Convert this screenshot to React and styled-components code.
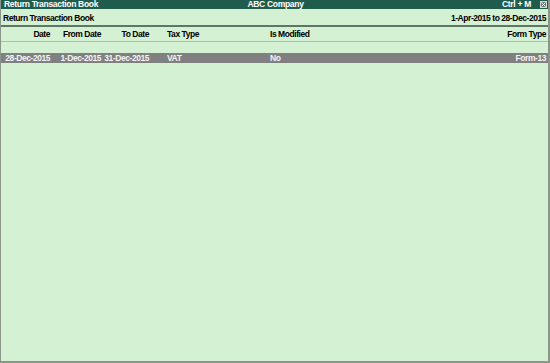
import React from 'react'
import styled, { createGlobalStyle } from 'styled-components'

const GlobalStyle = createGlobalStyle`
  html, body {
    margin: 0;
    padding: 0;
    background: #d4f1d4;
  }
  body {
    font-family: "Liberation Sans", Arial, sans-serif;
    font-weight: bold;
    font-size: 8.5px;
    letter-spacing: -0.45px;
  }
`

const Window = styled.div`
  width: 550px;
  height: 363px;
  box-sizing: border-box;
  display: flex;
  flex-direction: column;
  background: #d4f1d4;
  border-left: 1px solid #8a968a;
  border-right: 2px solid #8a968a;
  border-bottom: 2px solid #8a968a;
  color: #000;
`

const TitleBar = styled.div`
  height: 9px;
  display: grid;
  grid-template-columns: 1fr auto 1fr;
  align-items: center;
  background: #1f5c4d;
  color: #fff;
  padding: 0 1px 0 3px;
  line-height: 9px;
  letter-spacing: -0.3px;
`

const TitleRight = styled.div`
  display: flex;
  justify-content: flex-end;
  align-items: center;
  gap: 9px;
`

const CloseBox = styled.span`
  width: 7px;
  height: 7px;
  box-sizing: border-box;
  border: 1px solid #d8d8d8;
  background: #6c7a74;
  display: flex;
  align-items: center;
  justify-content: center;
`

const SubHeader = styled.div`
  height: 15px;
  display: flex;
  align-items: center;
  justify-content: space-between;
  padding: 1px 2px 0 2px;
  border-bottom: 2px solid #5f7566;
`

const Row = styled.div`
  display: grid;
  grid-template-columns: 49px 51px 48px 121px 1fr auto;
  align-items: center;
  height: ${p => p.$height}px;
  padding-right: 2px;
  background: ${p => (p.$selected ? '#808080' : 'transparent')};
  color: ${p => (p.$selected ? '#f4f4f4' : '#000')};
  border-bottom: ${p => (p.$ruled ? '1px solid #a9bfab' : 'none')};
`

const Cell = styled.div`
  white-space: nowrap;
  text-align: ${p => p.$align || 'left'};
  padding-left: ${p => p.$indent || 0}px;
`

const Gap = styled.div`
  height: 11px;
`

const columns = [
  { key: 'date', label: 'Date', align: 'right' },
  { key: 'from', label: 'From Date', align: 'right' },
  { key: 'to', label: 'To Date', align: 'right' },
  { key: 'tax', label: 'Tax Type', indent: 18 },
  { key: 'modified', label: 'Is Modified' },
  { key: 'form', label: 'Form Type', align: 'right' },
]

const rows = [
  {
    date: '28-Dec-2015',
    from: '1-Dec-2015',
    to: '31-Dec-2015',
    tax: 'VAT',
    modified: 'No',
    form: 'Form-13',
  },
]

export default function App() {
  return (
    <>
      <GlobalStyle />
      <Window>
        <TitleBar>
          <span>Return Transaction Book</span>
          <span>ABC Company</span>
          <TitleRight>
            <span>Ctrl + M</span>
            <CloseBox>
              <svg width="5" height="5" viewBox="0 0 5 5">
                <path d="M0.5 0.5 L4.5 4.5 M4.5 0.5 L0.5 4.5" stroke="#fff" strokeWidth="1" />
              </svg>
            </CloseBox>
          </TitleRight>
        </TitleBar>
        <SubHeader>
          <span>Return Transaction Book</span>
          <span>1-Apr-2015 to 28-Dec-2015</span>
        </SubHeader>
        <Row $height={14} $ruled>
          {columns.map(c => (
            <Cell key={c.key} $align={c.align} $indent={c.indent}>{c.label}</Cell>
          ))}
        </Row>
        <Gap />
        {rows.map((r, i) => (
          <Row key={i} $height={10} $selected>
            {columns.map(c => (
              <Cell key={c.key} $align={c.align} $indent={c.indent}>{r[c.key]}</Cell>
            ))}
          </Row>
        ))}
      </Window>
    </>
  )
}
